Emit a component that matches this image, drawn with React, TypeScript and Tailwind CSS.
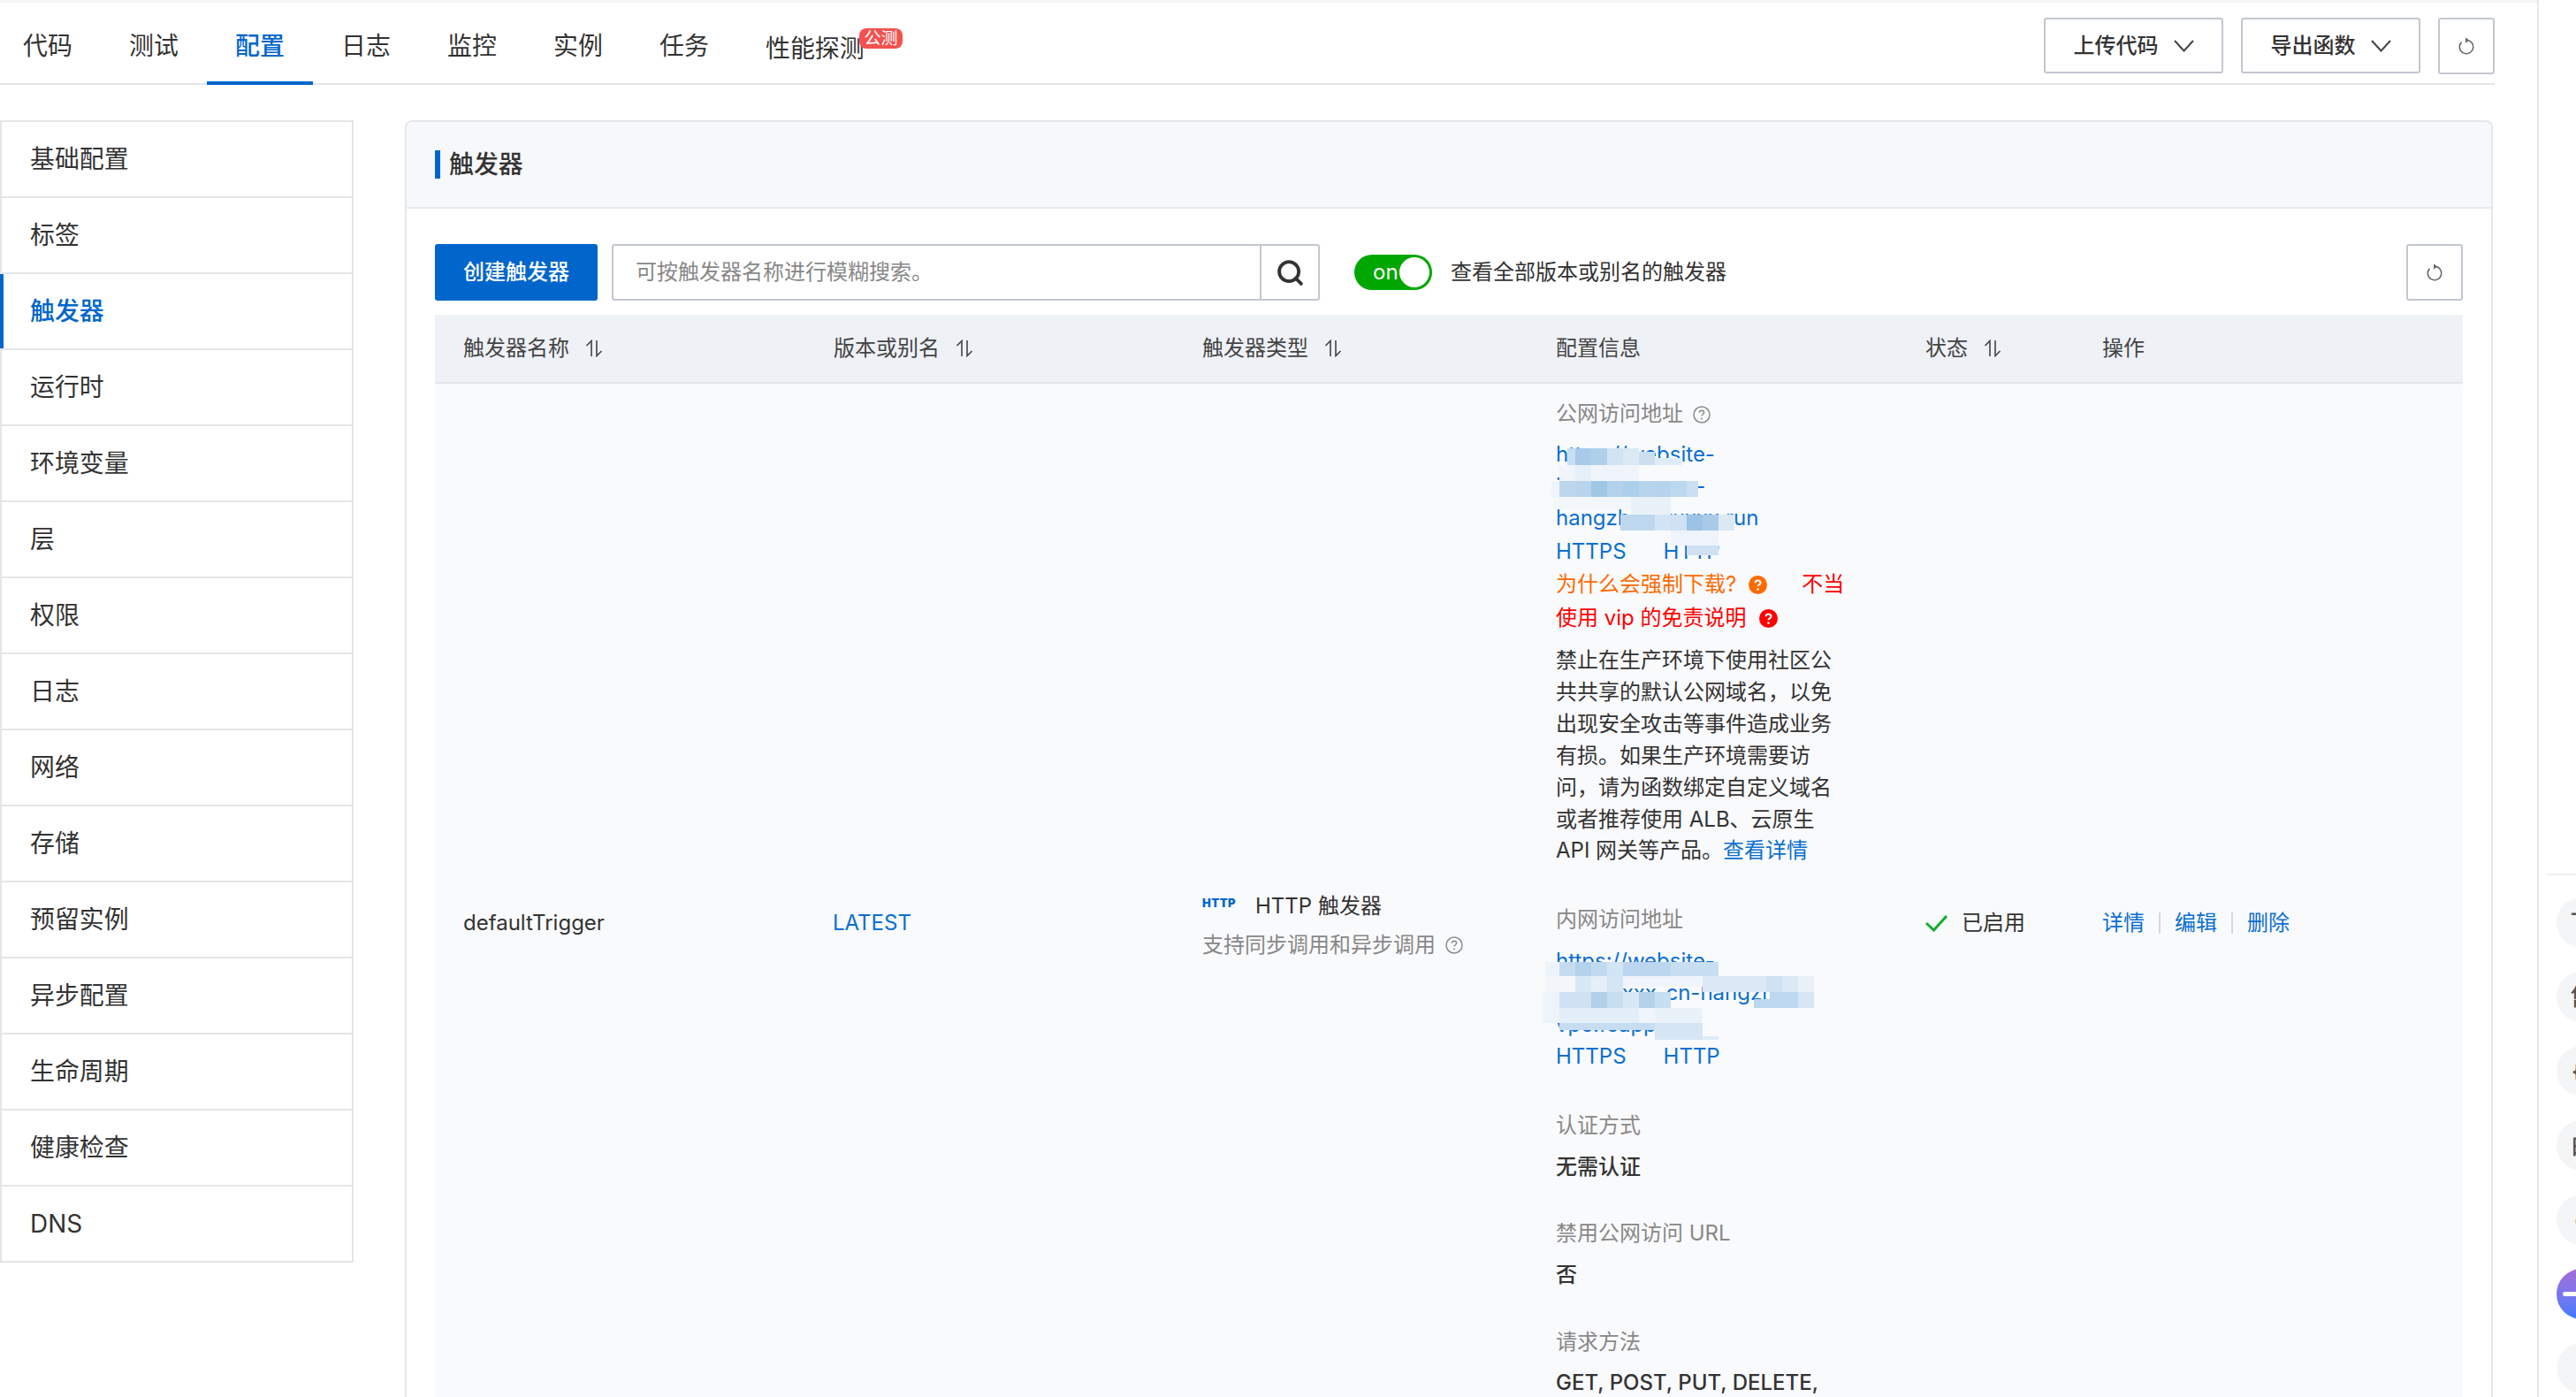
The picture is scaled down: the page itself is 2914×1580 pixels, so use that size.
import { Search } from "lucide-react";

const tabs = ["代码", "测试", "配置", "日志", "监控", "实例", "任务"];
const menu = ["基础配置", "标签", "触发器", "运行时", "环境变量", "层", "权限", "日志", "网络", "存储", "预留实例", "异步配置", "生命周期", "健康检查", "DNS"];

// [x, y, w, h, fill] page coordinates of the redaction mosaic
const mosaic: [number, number, number, number, string][] = [
  [1773, 507, 9, 19, "#c8def1"], [1782, 507, 18, 19, "#a8cbe9"], [1800, 507, 18, 19, "#afd0eb"], [1818, 507, 18, 19, "#d2e4f3"],
  [1836, 507, 18, 19, "#dbe9f5"], [1854, 511, 18, 15, "#cbdff1"], [1872, 518, 30, 8, "#dfecf7"],
  [1764, 526, 90, 18, "#f0f5fb"], [1782, 526, 18, 18, "#e6f0f8"],
  [1764, 544, 18, 18, "#bdd7ee"], [1782, 544, 18, 18, "#b9d5ed"], [1800, 544, 18, 18, "#a1c7e7"], [1818, 544, 18, 18, "#b3d1eb"],
  [1836, 544, 18, 18, "#aecfeb"], [1854, 544, 18, 18, "#b6d4ec"], [1872, 544, 18, 18, "#b5d3ec"], [1890, 544, 18, 18, "#bcd8ee"], [1908, 544, 13, 18, "#c9dff2"],
  [1755, 544, 9, 18, "#f0f5fb"],
  [1757, 562, 88, 14, "#f3f7fb"], [1845, 562, 45, 20, "#e9f1f9"],
  [1833, 582, 39, 18, "#bdd8ee"], [1872, 582, 18, 18, "#d3e4f4"], [1890, 582, 18, 18, "#cfe2f3"], [1908, 582, 18, 18, "#9cc2e5"],
  [1926, 582, 18, 18, "#a9cbe9"], [1944, 582, 18, 18, "#dbe9f5"],
  [1890, 600, 54, 17, "#eef4fa"],
  [1908, 617, 36, 11, "#cfe1f3"],

  [1748, 1088, 16, 16, "#edf3fa"], [1764, 1088, 18, 16, "#c5dcf0"], [1782, 1088, 18, 16, "#b3d2ec"], [1800, 1088, 18, 16, "#c2daef"],
  [1818, 1088, 18, 16, "#d3e4f4"], [1836, 1088, 54, 16, "#bbd6ee"], [1890, 1088, 54, 16, "#c8def1"],
  [1748, 1104, 16, 18, "#f2f6fb"], [1764, 1104, 18, 18, "#f3f7fb"], [1782, 1104, 18, 18, "#d9e8f5"], [1800, 1104, 18, 18, "#e4eff8"],
  [1818, 1104, 18, 18, "#d5e5f4"], [1836, 1104, 90, 12, "#eff5fb"], [1926, 1104, 72, 18, "#dbe8f5"], [1998, 1104, 18, 18, "#cfe1f2"],
  [2016, 1104, 18, 18, "#dbe9f6"], [2034, 1104, 18, 18, "#eaf1f9"],
  [1746, 1122, 18, 18, "#eef4fb"], [1764, 1122, 36, 18, "#cfe2f3"], [1800, 1122, 18, 18, "#b1d1eb"], [1818, 1122, 18, 18, "#c8def1"],
  [1836, 1122, 18, 18, "#d9e8f5"], [1854, 1122, 18, 18, "#b3d2ec"], [1872, 1122, 18, 18, "#c8def1"], [1984, 1130, 18, 10, "#bcd7ee"],
  [2002, 1122, 16, 18, "#bcd7ee"], [2018, 1122, 16, 18, "#bcd7ee"], [2034, 1122, 18, 18, "#d6e6f4"],
  [1746, 1140, 18, 17, "#eef4fb"], [1764, 1140, 90, 17, "#e3eef8"], [1854, 1140, 18, 17, "#eff5fb"], [1872, 1140, 54, 17, "#eaf2f9"],
  [1764, 1157, 108, 8, "#c6ddf1"], [1872, 1157, 54, 19, "#d5e5f4"], [1926, 1172, 18, 4, "#dfecf7"],
];

function SortIcon() {
  return (
    <svg className="ml-[18px] shrink-0" width="20" height="20" viewBox="0 0 20 20" fill="none" stroke="#444" strokeWidth="1.6">
      <path d="M7 19V1.500L1.500 7" />
      <path d="M13 1v17.500L18.500 13" />
    </svg>
  );
}

function RefreshIcon() {
  return (
    <svg width="18" height="20" viewBox="0 0 18 20" fill="none">
      <path d="M9 3.300A7.700 7.700 0 1 1 3.500 5.600" stroke="#666" strokeWidth="1.500" />
      <path d="M8 0.300v6.400l4-3.200z" fill="#666" />
    </svg>
  );
}

function Chevron() {
  return (
    <svg className="ml-[17px]" width="23" height="14" viewBox="0 0 23 14" fill="none" stroke="#444" strokeWidth="2">
      <path d="M1 1l10.500 11.500L22 1" />
    </svg>
  );
}

function Help() {
  return (
    <svg className="inline-block align-[-3px]" width="20" height="20" viewBox="0 0 20 20" fill="none">
      <circle cx="10" cy="10" r="9" stroke="#8a8a8a" strokeWidth="1.500" />
      <path d="M7.400 7.800c0-1.600 1.100-2.600 2.600-2.600s2.600 1 2.600 2.400c0 2.200-2.600 2.100-2.600 4" stroke="#8a8a8a" strokeWidth="1.500" />
      <circle cx="10" cy="14.600" r="1" fill="#8a8a8a" />
    </svg>
  );
}

function Ask({ fill }: { fill: string }) {
  return (
    <svg className="inline-block align-[-3px] ml-[14px]" width="21" height="21" viewBox="0 0 21 21">
      <circle cx="10.500" cy="10.500" r="10.500" fill={fill} />
      <path d="M7.500 8.200c0-1.800 1.300-2.800 3-2.800s3 1 3 2.600c0 2.400-3 2.300-3 4.300" fill="none" stroke="#fff" strokeWidth="2" />
      <circle cx="10.500" cy="15.500" r="1.300" fill="#fff" />
    </svg>
  );
}

function Btn({ label }: { label: string }) {
  return (
    <button className="w-[203px] h-[63px] flex items-center justify-center border-2 border-[#c2c7d0] rounded-[3px] bg-white text-[24px] font-medium text-[#333]">
      {label}
      <Chevron />
    </button>
  );
}

function IconBtn() {
  return (
    <button className="w-[64px] h-[64px] flex items-center justify-center border-2 border-[#c2c7d0] rounded-[3px] bg-white">
      <RefreshIcon />
    </button>
  );
}

function Th({ label, sort }: { label: string; sort?: boolean }) {
  return (
    <div className="flex items-center">
      {label}
      {sort && <SortIcon />}
    </div>
  );
}

function Label({ children, className = "" }: { children: React.ReactNode; className?: string }) {
  return <div className={`text-[#888] ${className}`}>{children}</div>;
}

export default function App() {
  return (
    <div className="relative flex w-[2914px] h-[1580px] overflow-hidden bg-white font-['Inter','Noto_Sans_CJK_SC',sans-serif] text-[24px] text-[#333]">
      <div className="w-[2872px] shrink-0 border-r-2 border-[#e6e7ea]">
        <div className="h-[3px] w-full bg-[#f5f5f6]" />
        <header className="w-[2822px] h-[93px] border-b-2 border-[#e5e6e9] flex items-start justify-between">
          <nav className="flex -ml-[6px]">
            {tabs.map((t) => (
              <div
                key={t}
                className={
                  t === "配置"
                    ? "w-[120px] h-[93px] text-center pt-[32px] text-[27.9px] leading-[34px] font-medium text-[#0066cc] border-b-[4px] border-[#0066cc]"
                    : "w-[120px] h-[93px] text-center pt-[32px] text-[27.9px] leading-[34px] text-[#333]"
                }
              >
                {t}
              </div>
            ))}
            <div className="relative h-[93px] pl-[32px] pt-[35px] text-[27.9px] leading-[34px]">
              性能探测
              <span className="absolute left-[138px] top-[29px] w-[49px] h-[23px] rounded-[8px] bg-[#f4514f] text-white text-[19px] leading-[23px] text-center">公测</span>
            </div>
          </nav>
          <div className="flex gap-[20px] pt-[17px]">
            <Btn label="上传代码" />
            <Btn label="导出函数" />
            <IconBtn />
          </div>
        </header>

        <div className="flex pt-[40px]">
          <aside className="w-[400px] border-2 border-[#e3e5e8] shrink-0 self-start">
            {menu.map((m, i) => (
              <div
                key={m}
                className={
                  m === "触发器"
                    ? "relative h-[86px] flex items-center pl-[32px] pt-[2px] text-[27.9px] font-medium text-[#0066cc] border-t-2 border-[#e3e5e8] before:absolute before:-left-[2px] before:top-0 before:bottom-0 before:w-[4px] before:bg-[#0066cc]"
                    : `flex items-center pl-[32px] pt-[2px] text-[27.9px] text-[#333] ${i === 0 ? "h-[84px]" : "h-[86px] border-t-2 border-[#e3e5e8]"}`
                }
              >
                {m}
              </div>
            ))}
          </aside>

          <section className="ml-[58px] w-[2362px] border-x-2 border-t-2 border-[#e5e7ea] rounded-t-[8px]">
            <div className="h-[98px] bg-[#f7f8fa] border-b-2 border-[#e9eaec] rounded-t-[6px] flex items-center pl-[32px]">
              <span className="w-[6px] h-[32px] bg-[#0066cc]" />
              <span className="ml-[10px] mt-[2px] text-[27.9px] font-medium text-[#333]">触发器</span>
            </div>
            <div className="px-[32px] pt-[40px]">
              <div className="flex items-center h-[64px]">
                <button className="w-[184px] h-[64px] bg-[#0066cc] rounded-[3px] text-white text-[24px] font-medium">创建触发器</button>
                <div className="ml-[16px] w-[801px] h-[64px] flex border-2 border-[#c2c7d0] rounded-[3px]">
                  <input
                    readOnly
                    placeholder="可按触发器名称进行模糊搜索。"
                    className="flex-1 min-w-0 pl-[25px] outline-none bg-transparent text-[24px] placeholder:text-[#888]"
                  />
                  <div className="w-[66px] flex items-center justify-center border-l-2 border-[#c2c7d0]">
                    <Search size={33} strokeWidth={2.8} color="#333" />
                  </div>
                </div>
                <div className="ml-[39px] w-[88px] h-[40px] rounded-full bg-[#00a700] flex items-center justify-between pl-[21px] pr-[3px]">
                  <span className="text-white text-[24px] leading-none">on</span>
                  <span className="w-[34px] h-[34px] rounded-full bg-white" />
                </div>
                <span className="ml-[21px] text-[#333]">查看全部版本或别名的触发器</span>
                <div className="ml-auto">
                  <IconBtn />
                </div>
              </div>

              <div className="mt-[16px] grid grid-cols-[419px_417px_400px_418px_200px_1fr] pl-[32px] h-[78px] items-center bg-[#eef1f6] border-b-2 border-[#e3e5ea] text-[#444]">
                <Th label="触发器名称" sort />
                <Th label="版本或别名" sort />
                <Th label="触发器类型" sort />
                <Th label="配置信息" />
                <Th label="状态" sort />
                <Th label="操作" />
              </div>

              <div className="grid grid-cols-[419px_417px_400px_418px_200px_1fr] pl-[32px] h-[1220px] items-center bg-[#f9fafc]">
                <div>defaultTrigger</div>
                <div className="text-[#0b6fd0] -ml-[1px]">LATEST</div>
                <div className="pt-[4px]">
                  <div className="flex items-center h-[40px]">
                    <span className="w-[60px] -mt-[8px] text-[13px] font-black leading-none tracking-[0.5px] text-[#0066cc]">HTTP</span>
                    HTTP 触发器
                  </div>
                  <div className="mt-[6px] text-[#888] flex items-center">
                    支持同步调用和异步调用
                    <span className="ml-[11px] flex"><Help /></span>
                  </div>
                </div>

                <div className="self-start pt-[16px] w-[330px] leading-[36px]">
                  <Label>
                    公网访问地址 <span className="ml-[4px]"><Help /></span>
                  </Label>
                  <div className="mt-[10px] text-[#0b6fd0]">
                    <div>https://website-</div>
                    <div>itemxx-fcxxxx-</div>
                    <div>hangzhou.xxxxx.run</div>
                    <div className="flex gap-[42px] mt-[2px]">
                      <span>HTTPS</span>
                      <span>HTTP</span>
                    </div>
                  </div>
                  <div className="leading-[38px]">
                    <span className="text-[#ff6a00]">为什么会强制下载?<Ask fill="#ff6a00" /></span>
                    <span className="text-[#ff0000] ml-[39px]">不当使用 vip 的免责说明<Ask fill="#ff0000" /></span>
                  </div>
                  <div className="mt-[11px] leading-[35.9px]">
                    禁止在生产环境下使用社区公共共享的默认公网域名，以免出现安全攻击等事件造成业务有损。如果生产环境需要访问，请为函数绑定自定义域名或者推荐使用 ALB、云原生 API 网关等产品。<span className="text-[#0b6fd0]">查看详情</span>
                  </div>
                  <Label className="mt-[42px]">内网访问地址</Label>
                  <div className="mt-[11px] text-[#0b6fd0]">
                    <div>https://website-</div>
                    <div className="whitespace-nowrap">itemxxxxx-cn-hangzhou</div>
                    <div>vpc.fcapp.run</div>
                    <div className="flex gap-[42px]">
                      <span>HTTPS</span>
                      <span>HTTP</span>
                    </div>
                  </div>
                  <Label className="mt-[42px]">认证方式</Label>
                  <div className="mt-[11px] font-medium">无需认证</div>
                  <Label className="mt-[39px]">禁用公网访问 URL</Label>
                  <div className="mt-[11px] font-medium">否</div>
                  <Label className="mt-[40px]">请求方法</Label>
                  <div className="mt-[10px] font-medium">GET, POST, PUT, DELETE, HEAD, OPTIONS</div>
                </div>

                <div className="flex items-center">
                  <svg width="26" height="20" viewBox="0 0 26 20" fill="none" stroke="#12ad2b" strokeWidth="3">
                    <path d="M1 10l8.500 8L24 2" />
                  </svg>
                  <span className="ml-[15px]">已启用</span>
                </div>
                <div className="flex items-center text-[#0b6fd0]">
                  <span>详情</span>
                  <span className="mx-[16px] w-[2px] h-[24px] bg-[#d5d8dd]" />
                  <span>编辑</span>
                  <span className="mx-[16px] w-[2px] h-[24px] bg-[#d5d8dd]" />
                  <span>删除</span>
                </div>
              </div>
            </div>
          </section>
        </div>
      </div>

      <aside className="flex-1 min-w-0 pt-[988px] pl-[8px]">
        <div className="h-[2px] bg-[#f0f1f3]" />
        <div className="mt-[25px] ml-[12px] flex flex-col gap-[27px] w-[57px]">
          {["下", "售", "{}", "白", "d"].map((g) => (
            <div key={g} className="w-[57px] h-[57px] shrink-0 rounded-full bg-[#f4f5f7] flex items-center justify-center text-[26px] font-medium text-[#555]">
              {g}
            </div>
          ))}
          <div className="relative w-[57px] h-[57px] shrink-0 rounded-full bg-gradient-to-b from-[#a56bd9] to-[#3a7cff]">
            <span className="absolute left-[7px] top-[26px] w-[43px] h-[5px] bg-white rounded-full" />
          </div>
          <div className="w-[57px] h-[57px] shrink-0 rounded-full bg-[#f4f5f7]" />
        </div>
      </aside>

      {/* 打码区域 */}
      <svg className="absolute left-0 top-0 w-[2914px] h-[1580px] pointer-events-none" viewBox="0 0 2914 1580">
        {mosaic.map(([x, y, w, h, fill], i) => (
          <rect key={i} x={x} y={y} width={w} height={h} fill={fill} />
        ))}
      </svg>
    </div>
  );
}
